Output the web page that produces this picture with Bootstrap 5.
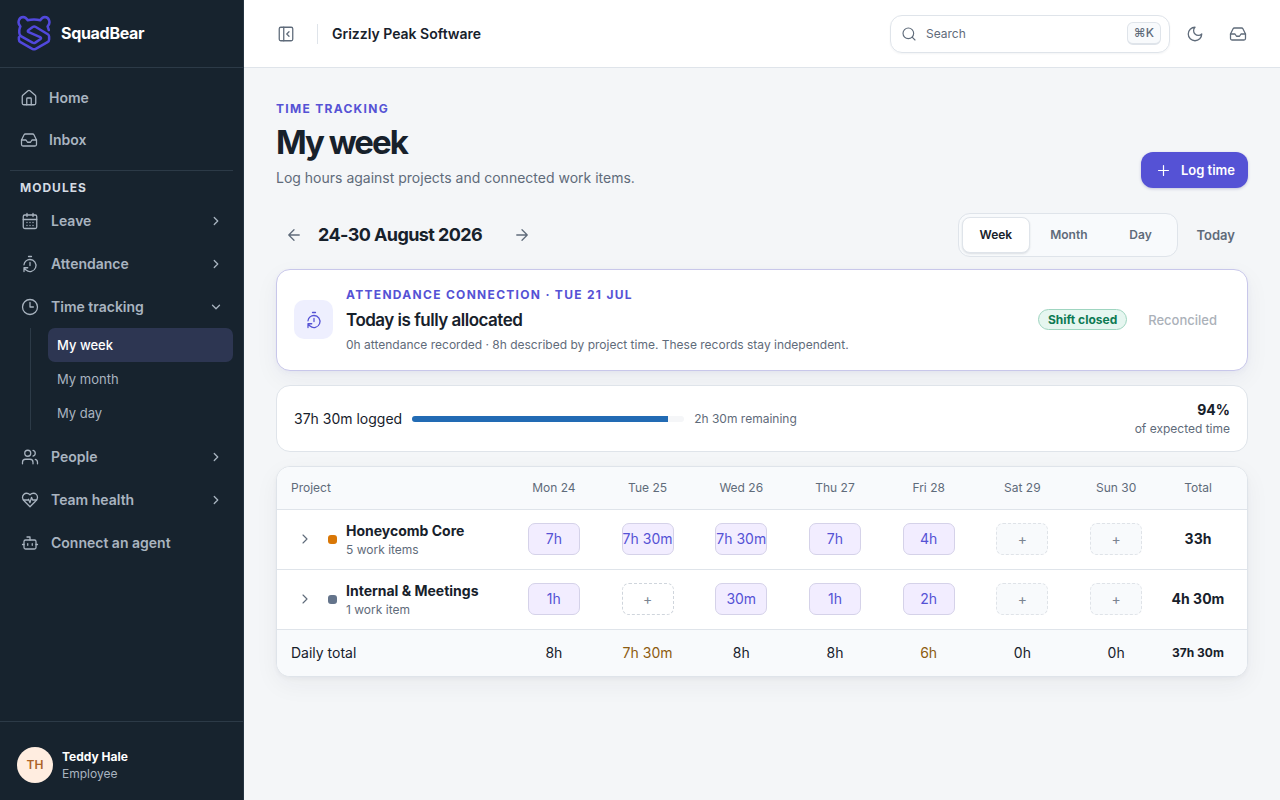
<!DOCTYPE html>
<html lang="en">
<head>
<meta charset="utf-8">
<meta name="viewport" content="width=device-width, initial-scale=1">
<title>My week · SquadBear</title>
<link href="https://cdn.jsdelivr.net/npm/bootstrap@5.3.0/dist/css/bootstrap.min.css" rel="stylesheet">
<style>
  :root { --ink:#17212b; --muted-ink:#5f6b7a; --line:#dfe4ea; --accent:#5552d5; --soft:#f8fafc; }
  body { font-family: Inter, "Liberation Sans", sans-serif; font-size:14px; line-height:20px; color:var(--ink); background:#f4f6f8; }
  svg.ico { width:18px; height:18px; fill:none; stroke:currentColor; stroke-width:1.7; stroke-linecap:round; stroke-linejoin:round; flex:none; display:block; }
  svg.ico-sm { width:16px; height:16px; }
  svg.ico-xs { width:14px; height:14px; stroke-width:2.2; }
  a { text-decoration:none; color:inherit; }

  .side { width:244px; background:#17232e; color:#a9b4c0; border-right:1px solid #253441; }
  .side-brand { height:68px; padding:0 17px 1px; gap:10px; border-bottom:1px solid #2c3a47; color:#fff; font-size:16px; font-weight:700; letter-spacing:-.3px; }
  .side-nav { padding:9px 10px 0; }
  .side-link { height:42px; padding:0 10px; font-weight:600; gap:11px; border:0; background:none; color:#a9b4c0; width:100%; text-align:left; }
  .mod-link { height:43px; padding:0 10px 0 11px; gap:12px; }
  .side-caption { font-size:12px; line-height:16px; font-weight:700; letter-spacing:1px; color:#d4dbe3; border-top:1px solid #2c3a47; margin-top:9px; padding:9px 10px 3px; }
  .sub-nav { margin:0 0 5px 20px; padding-left:17px; border-left:1px solid #2c3a47; }
  .sub-nav a { display:block; height:34px; line-height:34px; padding:0 9px; font-size:13px; border-radius:7px; }
  .sub-nav a.active { background:#2d3652; color:#fff; font-weight:500; }
  .side-user { border-top:1px solid #2c3a47; padding:25px 17px 17px; gap:9px; }
  .avatar { width:36px; height:36px; background:#ffede0; color:#ad6328; font-size:12px; font-weight:600; }
  .t12 { font-size:12px; line-height:17px; }

  .topbar { height:68px; padding:0 24px 0 33px; background:#fff; border-bottom:1px solid var(--line); gap:7px; }
  .icon-btn { border:0; background:none; padding:0; color:var(--muted-ink); }
  .org { font-weight:600; border-left:1px solid var(--line); padding:0 0 0 14px; margin-left:15px; }
  .search-box { width:280px; height:38px; border:1px solid var(--line); border-radius:12px; padding:0 8px 0 10px; gap:9px; color:var(--muted-ink); box-shadow:0 1px 2px rgba(20,30,50,.05); }
  .search-box input { border:0; outline:0; min-width:0; background:none; font-size:12px; padding:0; color:var(--ink); }
  .search-box input::placeholder { color:var(--muted-ink); opacity:1; }
  .keycap { font:500 12px/20px Inter, "DejaVu Sans", sans-serif; background:var(--soft); border:1px solid var(--line); border-bottom-width:2px; border-radius:6px; padding:0 6px; color:var(--muted-ink); }

  main { padding:32px; }
  .eyebrow { font-size:12px; line-height:17px; font-weight:700; letter-spacing:1.3px; color:var(--accent); text-transform:uppercase; margin:0; }
  h1 { font-size:33px; line-height:40px; font-weight:700; letter-spacing:-2px; margin:5px 0 6px; }
  .text-soft { color:var(--muted-ink); }
  .btn-log { height:36px; background:var(--accent); color:#fff; border:0; border-radius:12px; font-size:13px; font-weight:600; padding:0 13px 0 14px; gap:9px; box-shadow:0 1px 3px rgba(50,50,130,.25); }
  .btn-log svg.ico { width:17px; height:17px; }
  .week-bar { margin:25px 0 12px; gap:6px; }
  .arrow { width:36px; height:36px; }
  h2 { font-size:18px; line-height:24px; font-weight:700; letter-spacing:-.6px; margin:0; min-width:180px; }
  .seg { border:1px solid var(--line); background:var(--soft); border-radius:12px; padding:3px; gap:2px; }
  .seg button { border:1px solid transparent; background:none; height:36px; border-radius:8px; font-size:12px; font-weight:600; color:var(--muted-ink); padding:0 17px; min-width:66px; }
  .seg button.active { background:#fff; color:var(--ink); border-color:var(--line); box-shadow:0 1px 2px rgba(20,30,50,.12); }
  .today { font-size:13px; font-weight:600; padding:0 13px; }

  .panel { background:#fff; border:1px solid var(--line); border-radius:14px; }
  .attend { border-color:#c8c7ea; padding:16px 17px 17px; gap:13px; box-shadow:0 8px 24px rgba(30,35,70,.05), 0 2px 5px rgba(80,75,200,.05); }
  .attend-ico { width:39px; height:39px; border-radius:10px; background:#eeeffe; color:var(--accent); }
  h3 { font-size:17px; line-height:24px; font-weight:600; letter-spacing:-.5px; margin:5px 0 4px; }
  .pill { border:1px solid #9fd5c0; background:#e6f6f0; color:#0e7a53; font-size:12px; line-height:19px; font-weight:700; padding:0 9px; }
  .reconciled { color:#abb1b9; font-size:13px; font-weight:500; border:0; background:none; padding:0 13px 0 21px; }
  .summary { padding:14px 17px; gap:10px; margin:14px 0; }
  .meter { width:272px; height:6px; background:#f5f6f8; border-radius:6px; }
  .meter .progress-bar { background:#226bb4; }

  .sheet { overflow:hidden; box-shadow:0 8px 24px rgba(30,35,50,.05), 0 2px 4px rgba(30,35,50,.04); }
  .sheet table { table-layout:fixed; width:100%; text-align:center; }
  .sheet th, .sheet td { padding:0; font-weight:400; border-bottom:1px solid var(--line); }
  .sheet th:first-child { width:230px; text-align:left; padding-left:14px; }
  .sheet tr > :last-child { width:84px; padding-right:14px; font-weight:700; }
  .sheet thead th, .sheet thead tr > :last-child { height:42px; font-size:12px; font-weight:400; color:var(--muted-ink); background:var(--soft); }
  .sheet tbody th, .sheet tbody td { height:60px; }
  .sheet tfoot th, .sheet tfoot td { height:47px; background:var(--soft); border:0; }
  .sheet tfoot tr > :last-child { font-size:12px; }
  .sheet-row { gap:9px; }
  .expand { width:28px; height:28px; }
  .dot { width:9px; height:9px; border-radius:3px; }
  .slot { width:52px; height:32px; margin:0 auto; padding:0; border:1px solid #d5d2e9; border-radius:7px; background:#f2edff; color:var(--accent); white-space:nowrap; display:flex; align-items:center; justify-content:center; }
  .slot.free { background:#fff; border:1px dashed #cfd5dc; color:#7b8491; }
  .slot.off { background:var(--soft); border-color:#dfe3e8; }
  .warn { color:#8d5c10; }
</style>
</head>
<body>
<svg class="d-none" xmlns="http://www.w3.org/2000/svg">
  <symbol id="i-inbox" viewBox="0 0 24 24"><path d="M22 12h-6l-2 3h-4l-2-3H2"/><path d="M5.45 5.11 2 12v6a2 2 0 0 0 2 2h16a2 2 0 0 0 2-2v-6l-3.45-6.89A2 2 0 0 0 16.76 4H7.24a2 2 0 0 0-1.79 1.11z"/></symbol>
  <symbol id="i-timer" viewBox="0 0 24 24"><path d="M10 2h4M12 14v-4M4 13a8 8 0 0 1 8-7 8 8 0 1 1-5.3 14L4 17.6M9 17H4v5"/></symbol>
  <symbol id="i-right" viewBox="0 0 24 24"><path d="m9 18 6-6-6-6"/></symbol>
</svg>
<div class="d-flex min-vh-100">
  <aside class="side d-flex flex-column flex-shrink-0">
    <a href="#" class="side-brand d-flex align-items-center">
      <svg width="34" height="36" viewBox="0 0 34 36" fill="none" stroke="#5148dc" stroke-width="2.5" stroke-linecap="round" stroke-linejoin="round"><path d="M1.900 22.300V24.500Q1.900 26.300 3.500 27.200L15.300 33.900Q17 34.700 18.700 33.900L30.500 27.200Q32.100 26.300 32.100 24.500V21.500Q32.100 20 30.800 19.200L18.800 12Q17.200 11 15.700 12L11.600 14.900Q10 16.200 11.700 17.200L23.200 22.200Q24.800 23.100 23.300 24.200L18.300 27.600Q17 28.400 15.500 27.700L4.300 21.300Q2.400 20.200 2.300 18V15.300Q2.300 14.300 3.400 11.300C-.2 8 2 2.100 6.200 2.100Q8.900 2.200 10.600 5.200Q17 3.600 23.400 5.200Q25.100 2.200 27.800 2.100C32 2.100 34.200 8 30.600 11.300L31.800 15"/></svg>
      <span>SquadBear</span>
    </a>
    <nav class="side-nav flex-grow-1">
      <a href="#" class="side-link d-flex align-items-center"><svg class="ico" viewBox="0 0 24 24"><path d="M15 21v-8a1 1 0 0 0-1-1h-4a1 1 0 0 0-1 1v8"/><path d="M3 10a2 2 0 0 1 .709-1.528l7-6a2 2 0 0 1 2.582 0l7 6A2 2 0 0 1 21 10v9a2 2 0 0 1-2 2H5a2 2 0 0 1-2-2z"/></svg>Home</a>
      <a href="#" class="side-link d-flex align-items-center"><svg class="ico"><use href="#i-inbox"/></svg>Inbox</a>
      <div class="side-caption">MODULES</div>
      <button type="button" class="side-link mod-link d-flex align-items-center"><svg class="ico" viewBox="0 0 24 24"><path d="M8 2v4M16 2v4M3 10h18M8 14h.01M12 14h.01M16 14h.01M8 18h.01M12 18h.01M16 18h.01"/><rect width="18" height="18" x="3" y="4" rx="2"/></svg><span class="flex-grow-1">Leave</span><svg class="ico ico-xs"><use href="#i-right"/></svg></button>
      <button type="button" class="side-link mod-link d-flex align-items-center"><svg class="ico"><use href="#i-timer"/></svg><span class="flex-grow-1">Attendance</span><svg class="ico ico-xs"><use href="#i-right"/></svg></button>
      <button type="button" class="side-link mod-link d-flex align-items-center"><svg class="ico" viewBox="0 0 24 24"><circle cx="12" cy="12" r="10"/><path d="M12 6v6h4.500"/></svg><span class="flex-grow-1">Time tracking</span><svg class="ico ico-xs" viewBox="0 0 24 24"><path d="m6 9 6 6 6-6"/></svg></button>
      <div class="sub-nav">
        <a href="#" class="active" aria-current="page">My week</a>
        <a href="#">My month</a>
        <a href="#">My day</a>
      </div>
      <button type="button" class="side-link mod-link d-flex align-items-center"><svg class="ico" viewBox="0 0 24 24"><path d="M16 21v-2a4 4 0 0 0-4-4H6a4 4 0 0 0-4 4v2"/><circle cx="9" cy="7" r="4"/><path d="M22 21v-2a4 4 0 0 0-3-3.870M16 3.130a4 4 0 0 1 0 7.750"/></svg><span class="flex-grow-1">People</span><svg class="ico ico-xs"><use href="#i-right"/></svg></button>
      <button type="button" class="side-link mod-link d-flex align-items-center"><svg class="ico" viewBox="0 0 24 24"><path d="M19 14c1.490-1.460 3-3.210 3-5.500A5.500 5.500 0 0 0 16.500 3c-1.760 0-3 .5-4.500 2-1.500-1.500-2.740-2-4.500-2A5.500 5.500 0 0 0 2 8.500c0 2.300 1.500 4.050 3 5.500l7 7Z"/><path d="M3.220 12H9.500l.5-1 2 4.500 2-7 1.500 3.500h5.270"/></svg><span class="flex-grow-1">Team health</span><svg class="ico ico-xs"><use href="#i-right"/></svg></button>
      <a href="#" class="side-link mod-link d-flex align-items-center"><svg class="ico" viewBox="0 0 24 24"><path d="M12 8V4H8M2 14h2M20 14h2M15 13v2M9 13v2"/><rect width="16" height="12" x="4" y="8" rx="2"/></svg>Connect an agent</a>
    </nav>
    <div class="side-user d-flex align-items-center">
      <div class="avatar rounded-circle d-flex align-items-center justify-content-center">TH</div>
      <div class="t12"><div class="text-white fw-bold">Teddy Hale</div><div>Employee</div></div>
    </div>
  </aside>

  <div class="flex-grow-1 d-flex flex-column overflow-hidden">
    <header class="topbar d-flex align-items-center">
      <button type="button" class="icon-btn" aria-label="Collapse sidebar"><svg class="ico" viewBox="0 0 24 24"><rect width="18" height="18" x="3" y="3" rx="2"/><path d="M9 3v18M16 15l-3-3 3-3"/></svg></button>
      <div class="org">Grizzly Peak Software</div>
      <label class="search-box d-flex align-items-center ms-auto">
        <svg class="ico ico-sm" viewBox="0 0 24 24"><circle cx="11" cy="11" r="8"/><path d="m21 21-4.300-4.300"/></svg>
        <input type="search" class="flex-grow-1" placeholder="Search" aria-label="Search">
        <kbd class="keycap">⌘K</kbd>
      </label>
      <button type="button" class="icon-btn arrow d-flex align-items-center justify-content-center" aria-label="Dark mode"><svg class="ico" viewBox="0 0 24 24"><path d="M12 3a6 6 0 0 0 9 9 9 9 0 1 1-9-9Z"/></svg></button>
      <button type="button" class="icon-btn arrow d-flex align-items-center justify-content-center" aria-label="Inbox"><svg class="ico"><use href="#i-inbox"/></svg></button>
    </header>

    <main>
      <div class="d-flex align-items-end justify-content-between">
        <div>
          <p class="eyebrow">Time tracking</p>
          <h1>My week</h1>
          <p class="text-soft m-0">Log hours against projects and connected work items.</p>
        </div>
        <button type="button" class="btn-log d-flex align-items-center"><svg class="ico" viewBox="0 0 24 24"><path d="M5 12h14M12 5v14"/></svg>Log time</button>
      </div>

      <div class="week-bar d-flex align-items-center">
        <button type="button" class="icon-btn arrow d-flex align-items-center justify-content-center" aria-label="Previous week"><svg class="ico" viewBox="0 0 24 24"><path d="m12 19-7-7 7-7M19 12H5"/></svg></button>
        <h2>24-30 August 2026</h2>
        <button type="button" class="icon-btn arrow d-flex align-items-center justify-content-center" aria-label="Next week"><svg class="ico" viewBox="0 0 24 24"><path d="M5 12h14M12 5l7 7-7 7"/></svg></button>
        <div class="seg d-flex ms-auto">
          <button type="button" class="active">Week</button><button type="button">Month</button><button type="button">Day</button>
        </div>
        <button type="button" class="icon-btn today">Today</button>
      </div>

      <section class="panel attend d-flex align-items-center">
        <div class="attend-ico d-flex align-items-center justify-content-center"><svg class="ico"><use href="#i-timer"/></svg></div>
        <div class="flex-grow-1">
          <p class="eyebrow">Attendance connection · Tue 21 Jul</p>
          <h3>Today is fully allocated</h3>
          <p class="t12 text-soft m-0">0h attendance recorded · 8h described by project time. These records stay independent.</p>
        </div>
        <div class="d-flex align-items-center">
          <span class="pill rounded-pill">Shift closed</span>
          <button type="button" class="reconciled" disabled>Reconciled</button>
        </div>
      </section>

      <section class="panel summary d-flex align-items-center">
        <span>37h 30m logged</span>
        <div class="progress meter" role="progressbar" aria-label="Logged time" aria-valuenow="94" aria-valuemin="0" aria-valuemax="100"><div class="progress-bar" style="width:94%"></div></div>
        <span class="t12 text-soft">2h 30m remaining</span>
        <div class="ms-auto text-end"><div class="fw-bold">94%</div><div class="t12 text-soft">of expected time</div></div>
      </section>

      <section class="panel sheet">
        <table>
          <thead><tr><th>Project</th><th>Mon 24</th><th>Tue 25</th><th>Wed 26</th><th>Thu 27</th><th>Fri 28</th><th>Sat 29</th><th>Sun 30</th><th>Total</th></tr></thead>
          <tbody>
            <tr>
              <th scope="row"><div class="sheet-row d-flex align-items-center"><button type="button" class="icon-btn expand d-flex align-items-center justify-content-center" aria-label="Expand Honeycomb Core"><svg class="ico ico-sm"><use href="#i-right"/></svg></button><span class="dot" style="background:#d97706"></span><div><div class="fw-bold">Honeycomb Core</div><div class="t12 text-soft">5 work items</div></div></div></th>
              <td><button type="button" class="slot">7h</button></td><td><button type="button" class="slot">7h 30m</button></td><td><button type="button" class="slot">7h 30m</button></td><td><button type="button" class="slot">7h</button></td><td><button type="button" class="slot">4h</button></td><td><button type="button" class="slot free off">+</button></td><td><button type="button" class="slot free off">+</button></td><td>33h</td>
            </tr>
            <tr>
              <th scope="row"><div class="sheet-row d-flex align-items-center"><button type="button" class="icon-btn expand d-flex align-items-center justify-content-center" aria-label="Expand Internal &amp; Meetings"><svg class="ico ico-sm"><use href="#i-right"/></svg></button><span class="dot" style="background:#64748b"></span><div><div class="fw-bold">Internal &amp; Meetings</div><div class="t12 text-soft">1 work item</div></div></div></th>
              <td><button type="button" class="slot">1h</button></td><td><button type="button" class="slot free">+</button></td><td><button type="button" class="slot">30m</button></td><td><button type="button" class="slot">1h</button></td><td><button type="button" class="slot">2h</button></td><td><button type="button" class="slot free off">+</button></td><td><button type="button" class="slot free off">+</button></td><td>4h 30m</td>
            </tr>
          </tbody>
          <tfoot><tr><th scope="row">Daily total</th><td>8h</td><td class="warn">7h 30m</td><td>8h</td><td>8h</td><td class="warn">6h</td><td>0h</td><td>0h</td><td>37h 30m</td></tr></tfoot>
        </table>
      </section>
    </main>
  </div>
</div>
<script src="https://cdn.jsdelivr.net/npm/bootstrap@5.3.0/dist/js/bootstrap.bundle.min.js"></script>
</body>
</html>
